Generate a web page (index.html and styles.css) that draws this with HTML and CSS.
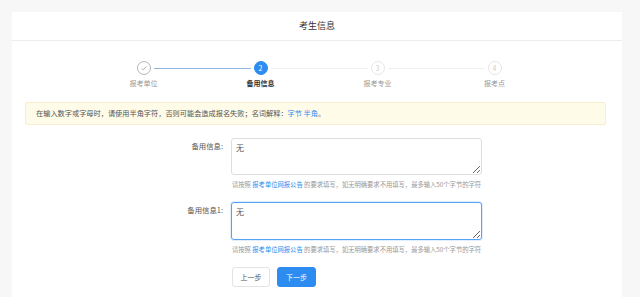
FILE: index.html
```html
<!DOCTYPE html>
<html lang="zh">
<head>
  <meta charset="UTF-8">
  <title>考生信息</title>
  <link rel="stylesheet" href="styles.css">
</head>
<body>
  <div class="card">
    <header class="card-head">考生信息</header>

    <div class="steps">
      <div class="step done">
        <span class="dot">
          <svg width="8" height="8" viewBox="0 0 8 8"><path d="M1.6 4.2 L3.3 5.8 L6.4 2.4" fill="none" stroke="#999" stroke-width="0.8"/></svg>
        </span>
        <span class="label">报考单位</span>
      </div>
      <div class="step active">
        <span class="dot">2</span>
        <span class="label">备用信息</span>
      </div>
      <div class="step">
        <span class="dot">3</span>
        <span class="label">报考专业</span>
      </div>
      <div class="step last">
        <span class="dot">4</span>
        <span class="label">报考点</span>
      </div>
    </div>

    <div class="alert">在输入数字或字母时，请使用半角字符，否则可能会造成报名失败；名词解释：<a>字节</a> <a>半角</a>。</div>

    <div class="row">
      <label class="row-label">备用信息:</label>
      <textarea class="input">无</textarea>
    </div>
    <p class="help">请按照 <a>报考单位网报公告</a> 的要求填写，如无明确要求不用填写，最多输入50个字节的字符</p>

    <div class="row">
      <label class="row-label">备用信息1:</label>
      <textarea class="input focus">无</textarea>
    </div>
    <p class="help">请按照 <a>报考单位网报公告</a> 的要求填写，如无明确要求不用填写，最多输入50个字节的字符</p>

    <div class="actions">
      <button class="btn">上一步</button>
      <button class="btn primary">下一步</button>
    </div>
  </div>
</body>
</html>
```

FILE: styles.css
```css
body {
  margin: 0;
  padding: 12px 18px 0 12px;
  background: #f7f7f7;
  font-family: "Noto Sans CJK SC", "Noto Sans", sans-serif;
  color: #555;
}
.card {
  background: #fff;
  height: 285px;
  overflow: hidden;
}
.card-head {
  height: 29px;
  line-height: 28px;
  text-align: center;
  font-size: 9px;
  color: #333;
  border-bottom: 1px solid #ececec;
  box-sizing: border-box;
}
.steps {
  display: flex;
  width: 468px;
  margin: 20px 0 0 73px;
}
.step {
  flex: 1;
  position: relative;
  display: flex;
  flex-direction: column;
  align-items: center;
}
.step::after {
  content: "";
  position: absolute;
  top: 7px;
  left: calc(50% + 10px);
  width: calc(100% - 20px);
  height: 1px;
  background: #efefef;
}
.step.done::after {
  background: #8fb6df;
}
.step.last::after {
  display: none;
}
.dot {
  width: 14px;
  height: 14px;
  border-radius: 50%;
  border: 1px solid #e6e6e6;
  box-sizing: border-box;
  display: flex;
  align-items: center;
  justify-content: center;
  font-size: 7px;
  color: #ccc;
  background: #fff;
}
.done .dot {
  border-color: #b5b5b5;
}
.active .dot {
  background: #2d8cf0;
  border-color: #2d8cf0;
  color: #fff;
}
.label {
  margin-top: 3px;
  font-size: 7px;
  line-height: 10px;
  color: #999;
}
.active .label {
  color: #333;
  font-weight: bold;
}
.alert {
  margin: 14px 16px 0 13px;
  height: 23px;
  box-sizing: border-box;
  padding: 0 10px;
  line-height: 21px;
  font-size: 7.2px;
  color: #555;
  background: #fefbe8;
  border: 1px solid #f6eecd;
  border-radius: 2px;
}
.alert a, .help a {
  color: #2d8cf0;
}
.row {
  display: flex;
  gap: 8px;
  margin-top: 13px;
}
.row-label {
  width: 211px;
  text-align: right;
  font-size: 7.4px;
  line-height: 10px;
  padding-top: 3px;
  color: #555;
}
.input {
  width: 251px;
  height: 37px;
  box-sizing: border-box;
  border: 1px solid #dcdee2;
  border-radius: 3px;
  padding: 3px 4px;
  font-family: inherit;
  font-size: 8px;
  line-height: 11px;
  color: #555;
  resize: vertical;
  margin: 0;
}
.input.focus {
  height: 38px;
  border-color: #57a3f3;
  box-shadow: 0 0 0 1px rgba(45,140,240,0.15);
}
.help {
  margin: 5px 0 0 220px;
  font-size: 6.3px;
  line-height: 9px;
  color: #999;
}
.actions {
  display: flex;
  gap: 7px;
  margin: 13px 0 0 220px;
}
.btn {
  width: 38px;
  height: 20px;
  border: 1px solid #e3e3e3;
  border-radius: 3px;
  background: #fff;
  font-family: inherit;
  font-size: 7px;
  color: #555;
  padding: 0;
}
.btn.primary {
  width: 39px;
  background: #2d8cf0;
  border-color: #2d8cf0;
  color: #fff;
}
```
